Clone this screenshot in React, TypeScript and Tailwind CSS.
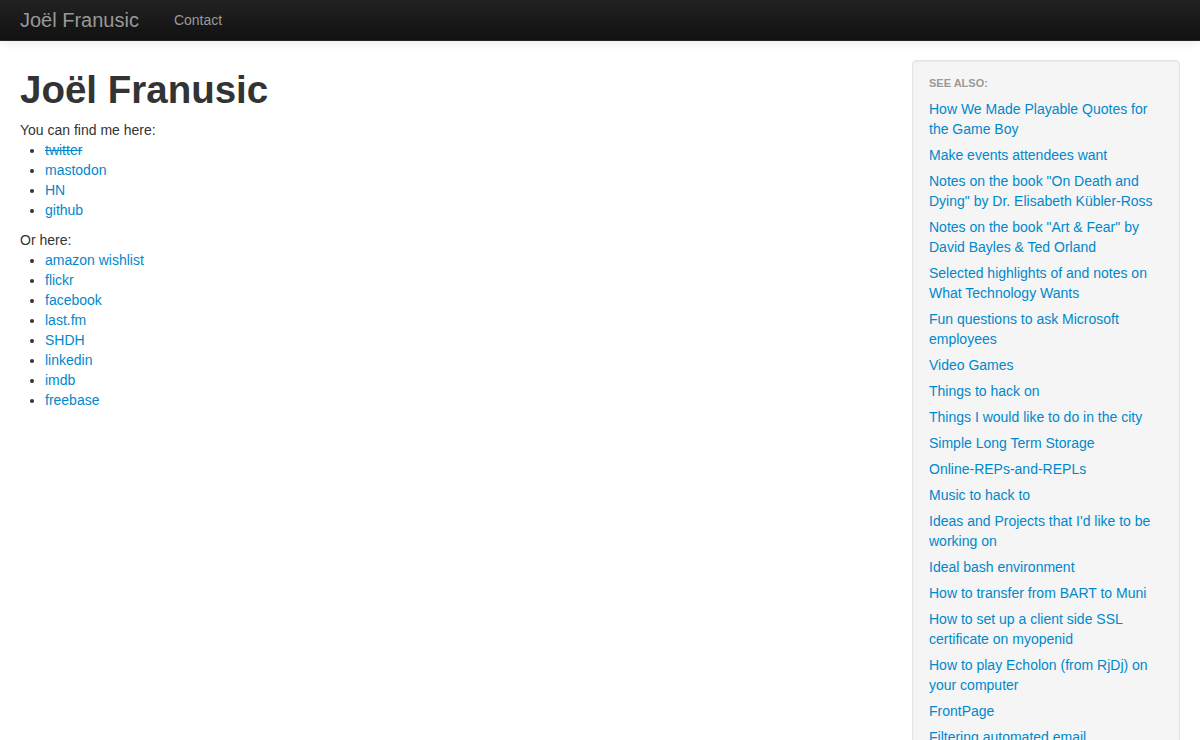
import React from "react";

const seeAlso = [
  "How We Made Playable Quotes for the Game Boy",
  "Make events attendees want",
  'Notes on the book "On Death and Dying" by Dr. Elisabeth Kübler-Ross',
  'Notes on the book "Art & Fear" by David Bayles & Ted Orland',
  "Selected highlights of and notes on What Technology Wants",
  "Fun questions to ask Microsoft employees",
  "Video Games",
  "Things to hack on",
  "Things I would like to do in the city",
  "Simple Long Term Storage",
  "Online-REPs-and-REPLs",
  "Music to hack to",
  "Ideas and Projects that I'd like to be working on",
  "Ideal bash environment",
  "How to transfer from BART to Muni",
  "How to set up a client side SSL certificate on myopenid",
  "How to play Echolon (from RjDj) on your computer",
  "FrontPage",
  "Filtering automated email",
  "Emacs",
  "Books",
];

const findMe = ["mastodon", "HN", "github"];
const orHere = ["amazon wishlist", "flickr", "facebook", "last.fm", "SHDH", "linkedin", "imdb", "freebase"];

export default function App() {
  return (
    <div className="min-h-screen bg-white text-[14px] leading-[20px] text-[#333333] [font-family:'Liberation_Sans',Arial,sans-serif]">
      <div className="h-[41px] bg-gradient-to-b from-[#222222] to-[#111111] border-b border-[#252525] shadow-[0_1px_10px_rgba(0,0,0,0.1)] flex items-start px-5">
        <a className="text-[20px] leading-[20px] text-[#999999] py-[10px] pr-5 font-normal">Joël Franusic</a>
        <a className="text-[14px] leading-[20px] text-[#999999] py-[10px] px-[15px]">Contact</a>
      </div>
      <div className="px-5 pt-[19px] flex gap-[30px]">
        <div className="flex-1">
          <h1 className="text-[38.5px] leading-[40px] font-bold text-[#333333] my-[10px]">Joël Franusic</h1>
          <div>You can find me here:</div>
          <ul className="list-disc ml-[25px] mb-[10px]">
            <li>
              <a className="text-[#0088cc] line-through">twitter</a>
            </li>
            {findMe.map((t) => (
              <li key={t}>
                <a className="text-[#0088cc]">{t}</a>
              </li>
            ))}
          </ul>
          <div>Or here:</div>
          <ul className="list-disc ml-[25px] mb-[10px]">
            {orHere.map((t) => (
              <li key={t}>
                <a className="text-[#0088cc]">{t}</a>
              </li>
            ))}
          </ul>
        </div>
        <div className="w-[268px] shrink-0">
          <div className="bg-[#f5f5f5] border border-[#e3e3e3] rounded-[4px] shadow-[inset_0_1px_1px_rgba(0,0,0,0.05)] py-[9px] pl-[16px] pr-[14px]">
            <div className="text-[11px] leading-[20px] font-bold uppercase text-[#999999] py-[3px] [text-shadow:0_1px_0_rgba(255,255,255,0.5)]">
              See also:
            </div>
            <ul>
              {seeAlso.map((t) => (
                <li key={t} className="py-[3px]">
                  <a className="text-[#0088cc]">{t}</a>
                </li>
              ))}
            </ul>
          </div>
        </div>
      </div>
    </div>
  );
}
